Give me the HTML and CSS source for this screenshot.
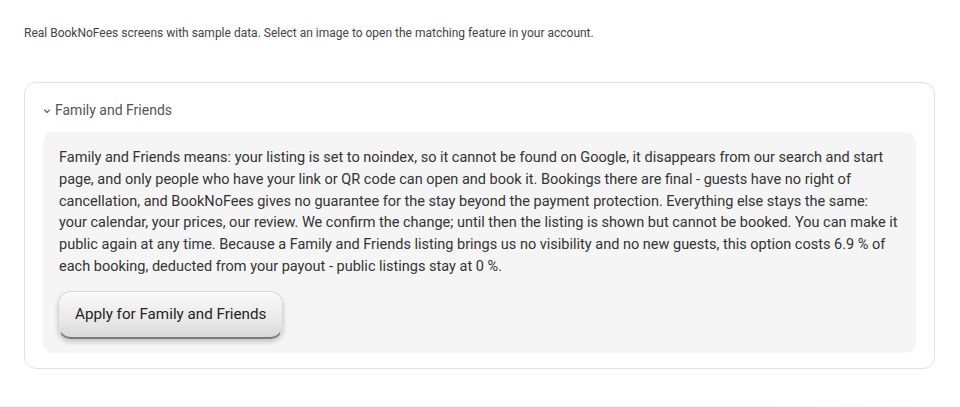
FILE: index.html
```html
<!DOCTYPE html>
<html lang="en">
<head>
<meta charset="utf-8">
<title>BookNoFees – Family and Friends</title>
<link rel="stylesheet" href="styles.css">
</head>
<body>
<main class="page">
  <p class="intro">Real BookNoFees screens with sample data. Select an image to open the matching feature in your account.</p>
  <details class="card" open>
    <summary class="card-summary">
      <svg class="chev" viewBox="0 0 8 8" width="8" height="8" aria-hidden="true"><path d="M1.5 3 L4 5.5 L6.5 3" fill="none" stroke="#666" stroke-width="1.1" stroke-linecap="round" stroke-linejoin="round"/></svg>
      <span>Family and Friends</span>
    </summary>
    <div class="panel">
      <p class="panel-text">Family and Friends means: your listing is set to noindex, so it cannot be found on Google, it disappears from our search and start page, and only people who have your link or QR code can open and book it. Bookings there are final - guests have no right of cancellation, and BookNoFees gives no guarantee for the stay beyond the payment protection. Everything else stays the same: your calendar, your prices, our review. We confirm the change; until then the listing is shown but cannot be booked. You can make it public again at any time. Because a Family and Friends listing brings us no visibility and no new guests, this option costs 6.9 % of each booking, deducted from your payout - public listings stay at 0 %.</p>
      <button class="apply-btn" type="button">Apply for Family and Friends</button>
    </div>
  </details>
  <div class="footer-rule"></div>
</main>
</body>
</html>
```
FILE: styles.css
```css
html, body {
  margin: 0;
  padding: 0;
  background: #ffffff;
}

.page {
  padding: 26px 24px 0 24px;
  font-family: "Roboto", "Liberation Sans", sans-serif;
  color: #333;
}

.intro {
  margin: 0;
  font-size: 12px;
  line-height: 15px;
  color: #444;
}

.card {
  margin: 41px 1px 0 0;
  border: 1px solid #e2e2e2;
  border-radius: 12px;
  padding: 14px 18px 15px 18px;
  background: #fff;
}

.card-summary {
  list-style: none;
  display: flex;
  align-items: center;
  gap: 4px;
  font-size: 14px;
  color: #555;
  cursor: pointer;
  height: 26px;
}

.card-summary::-webkit-details-marker {
  display: none;
}

.chev {
  display: block;
  margin-top: 1px;
}

.panel {
  margin-top: 9px;
  background: #f5f5f5;
  border-radius: 10px;
  padding: 15px 18px 14px 16px;
}

.panel-text {
  margin: 0;
  font-size: 14.5px;
  line-height: 21.8px;
  color: #333;
}

.apply-btn {
  margin: 13px 0 0 -1px;
  font-family: inherit;
  font-size: 15.2px;
  color: #222;
  padding: 0 16px;
  height: 48px;
  border: 1px solid #d8d8d8;
  border-bottom: 2px solid #7a7a7a;
  border-radius: 13px;
  background: linear-gradient(#fafafa, #e6e6e6 70%, #d8d8d8);
  box-shadow: 0 3px 5px rgba(0, 0, 0, 0.2), inset 0 1px 0 #fff;
  cursor: pointer;
}

.footer-rule {
  margin: 37px -24px 0 -24px;
  height: 1px;
  background: linear-gradient(to right, #eeeeee 75%, #f8f8f8);
}
```
